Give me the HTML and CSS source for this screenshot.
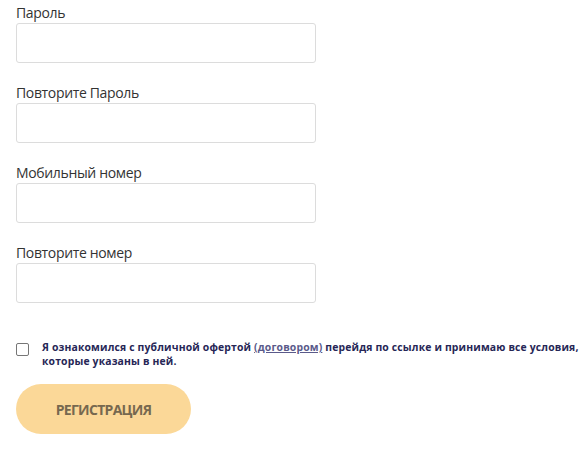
FILE: index.html
```html
<!DOCTYPE html>
<html lang="ru">
<head>
<meta charset="utf-8">
<link rel="stylesheet" href="styles.css">
</head>
<body>
<form class="form">
  <div class="field">
    <label class="label">Пароль</label>
    <input class="input" type="password">
  </div>
  <div class="field">
    <label class="label">Повторите Пароль</label>
    <input class="input" type="password">
  </div>
  <div class="field">
    <label class="label">Мобильный номер</label>
    <input class="input" type="text">
  </div>
  <div class="field">
    <label class="label">Повторите номер</label>
    <input class="input" type="text">
  </div>
  <div class="agree">
    <span class="box"></span>
    <p class="agree-text">Я ознакомился с публичной офертой <a class="link" href="#">(договором)</a> перейдя по ссылке и принимаю все условия, которые указаны в ней.</p>
  </div>
  <button class="btn" type="button">РЕГИСТРАЦИЯ</button>
</form>
</body>
</html>
```

FILE: styles.css
```css
html, body {
  margin: 0;
  padding: 0;
  background: #fff;
}
.form {
  padding: 3px 0 0 16px;
  font-family: "Open Sans", "Noto Sans", sans-serif;
}
.field {
  display: flex;
  flex-direction: column;
  margin-bottom: 20px;
}
.label {
  font-size: 14px;
  line-height: 20px;
  letter-spacing: -0.35px;
  color: #333;
}
.input {
  box-sizing: border-box;
  width: 300px;
  height: 40px;
  margin: 0;
  border: 1px solid #dcdcdc;
  border-radius: 3px;
  background: #fff;
}
.agree {
  display: flex;
  align-items: flex-start;
  margin-top: 37px;
}
.box {
  flex: none;
  box-sizing: border-box;
  width: 13px;
  height: 13px;
  margin-top: 3px;
  border: 1px solid #767676;
  border-radius: 2px;
}
.agree-text {
  margin: 0 0 0 13px;
  font-size: 10.4px;
  line-height: 14px;
  font-weight: 700;
  letter-spacing: 0.16px;
  color: #262656;
}
.link {
  color: #5a5a8a;
  text-decoration: underline;
}
.btn {
  display: block;
  margin-top: 16px;
  width: 175px;
  height: 50px;
  border: none;
  border-radius: 25px;
  background: #fbd898;
  color: #76684f;
  font-family: "Open Sans", sans-serif;
  font-size: 14px;
  font-weight: 700;
  letter-spacing: -0.7px;
}
```
